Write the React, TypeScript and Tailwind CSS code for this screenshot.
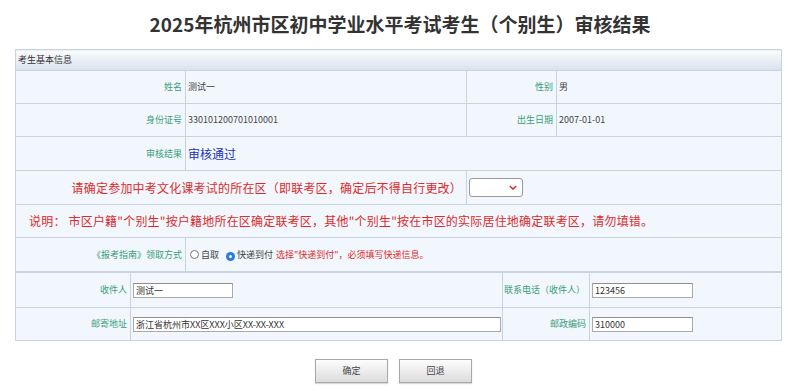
import React from "react"

const font = { fontFamily: '"Noto Sans CJK SC", "Noto Sans", sans-serif' }

function Label({ children }: { children: React.ReactNode }) {
  return (
    <td className="border border-[#c9d3de] pr-[3px] text-right align-middle text-[9px] text-[#3a9d7c]">
      {children}
    </td>
  )
}

function Value({ children, colSpan }: { children?: React.ReactNode; colSpan?: number }) {
  return (
    <td
      colSpan={colSpan}
      className="border border-[#c9d3de] pl-[2px] align-middle text-[9px] text-[#444]"
    >
      {children}
    </td>
  )
}

function TextInput({ value, width }: { value: string; width: string }) {
  return (
    <input
      readOnly
      value={value}
      className={`h-[15px] ${width} border border-[#a9a9a9] border-t-[#8f8f8f] bg-white px-[2px] text-[9px] text-[#333] outline-none`}
    />
  )
}

function Radio({ checked }: { checked?: boolean }) {
  return checked ? (
    <span className="inline-grid size-[9px] place-items-center rounded-full bg-[#2c7be5]">
      <span className="size-[3px] rounded-full bg-white" />
    </span>
  ) : (
    <span className="inline-block size-[9px] rounded-full border border-[#777] bg-white" />
  )
}

export default function App() {
  return (
    <div className="h-[391px] w-[800px] bg-white" style={font}>
      <div className="flex h-[49px] items-center justify-center">
        <h1 className="text-[19px] font-bold text-[#333]">
          2025年杭州市区初中学业水平考试考生（个别生）审核结果
        </h1>
      </div>

      <div className="ml-[15px] w-[766px]">
        <table className="w-full table-fixed border-collapse bg-[#f1f7fd]">
          <colgroup>
            <col className="w-[170px]" />
            <col className="w-[281px]" />
            <col className="w-[90px]" />
            <col className="w-[225px]" />
          </colgroup>
          <tbody>
            <tr className="h-[21px]">
              <td
                colSpan={4}
                className="border border-[#c9d3de] bg-gradient-to-b from-[#fbfcfe] to-[#d8e1eb] pl-[2px] text-[9px] text-[#333]"
              >
                考生基本信息
              </td>
            </tr>
            <tr className="h-[33px]">
              <Label>姓名</Label>
              <Value>测试一</Value>
              <Label>性别</Label>
              <Value>男</Value>
            </tr>
            <tr className="h-[33px]">
              <Label>身份证号</Label>
              <Value>330101200701010001</Value>
              <Label>出生日期</Label>
              <Value>2007-01-01</Value>
            </tr>
            <tr className="h-[34px]">
              <Label>审核结果</Label>
              <Value colSpan={3}>
                <span className="text-[12px] text-[#2233bb]">审核通过</span>
              </Value>
            </tr>
            <tr className="h-[34px]">
              <td
                colSpan={2}
                className="border border-[#c9d3de] pr-[4px] text-right align-middle text-[12px] tracking-[0.2px] text-[#e02a2a]"
              >
                请确定参加中考文化课考试的所在区（即联考区，确定后不得自行更改）
              </td>
              <td colSpan={2} className="border border-[#c9d3de] pl-[2px] align-middle text-[#e02a2a]">
                <div className="flex h-[19px] w-[54px] items-center justify-end rounded-[3px] border border-[#9a9a9a] bg-white pr-[5px]">
                  <svg viewBox="0 0 10 6" className="h-[5px] w-[8px]">
                    <path d="M1 1l4 4 4-4" fill="none" stroke="currentColor" strokeWidth="1.8" />
                  </svg>
                </div>
              </td>
            </tr>
            <tr className="h-[33px]">
              <td
                colSpan={4}
                className="border border-[#c9d3de] pl-[13px] align-middle text-[12px] tracking-[0.2px] text-[#e02a2a]"
              >
                说明： 市区户籍"个别生"按户籍地所在区确定联考区，其他"个别生"按在市区的实际居住地确定联考区，请勿填错。
              </td>
            </tr>
            <tr className="h-[34px]">
              <Label>《报考指南》领取方式</Label>
              <td colSpan={3} className="border border-[#c9d3de] pl-[4px] align-middle">
                <div className="flex items-center text-[9px] text-[#444]">
                  <Radio />
                  <span className="ml-[2px]">自取</span>
                  <span className="ml-[7px]">
                    <Radio checked />
                  </span>
                  <span className="ml-[2px]">快递到付</span>
                  <span className="ml-[3px] text-[#e02a2a]">选择"快递到付"，必须填写快递信息。</span>
                </div>
              </td>
            </tr>
          </tbody>
        </table>

        <table className="w-full table-fixed border-collapse bg-[#f1f7fd]">
          <colgroup>
            <col className="w-[115px]" />
            <col className="w-[372px]" />
            <col className="w-[87px]" />
            <col className="w-[192px]" />
          </colgroup>
          <tbody>
            <tr className="h-[35px]">
              <Label>收件人</Label>
              <Value>
                <TextInput value="测试一" width="w-[100px]" />
              </Value>
              <td className="border border-[#c9d3de] pl-[1px] align-middle text-[9px] text-[#3a9d7c]">
                联系电话（收件人）
              </td>
              <Value>
                <TextInput value="123456" width="w-[101px]" />
              </Value>
            </tr>
            <tr className="h-[33px]">
              <Label>邮寄地址</Label>
              <Value>
                <TextInput value="浙江省杭州市XX区XXX小区XX-XX-XXX" width="w-[368px]" />
              </Value>
              <Label>邮政编码</Label>
              <Value>
                <TextInput value="310000" width="w-[101px]" />
              </Value>
            </tr>
          </tbody>
        </table>
      </div>

      <div className="mt-[18px] flex gap-[11px] pl-[315px]">
        <button
          type="button"
          className="h-[24px] w-[73px] border border-[#a8a8a8] bg-gradient-to-b from-[#fdfdfd] to-[#dcdcdc] text-[9px] text-[#444] shadow-[0_1px_1px_rgba(0,0,0,0.15)]"
        >
          确定
        </button>
        <button
          type="button"
          className="h-[24px] w-[73px] border border-[#a8a8a8] bg-gradient-to-b from-[#fdfdfd] to-[#dcdcdc] text-[9px] text-[#444] shadow-[0_1px_1px_rgba(0,0,0,0.15)]"
        >
          回退
        </button>
      </div>
    </div>
  )
}
